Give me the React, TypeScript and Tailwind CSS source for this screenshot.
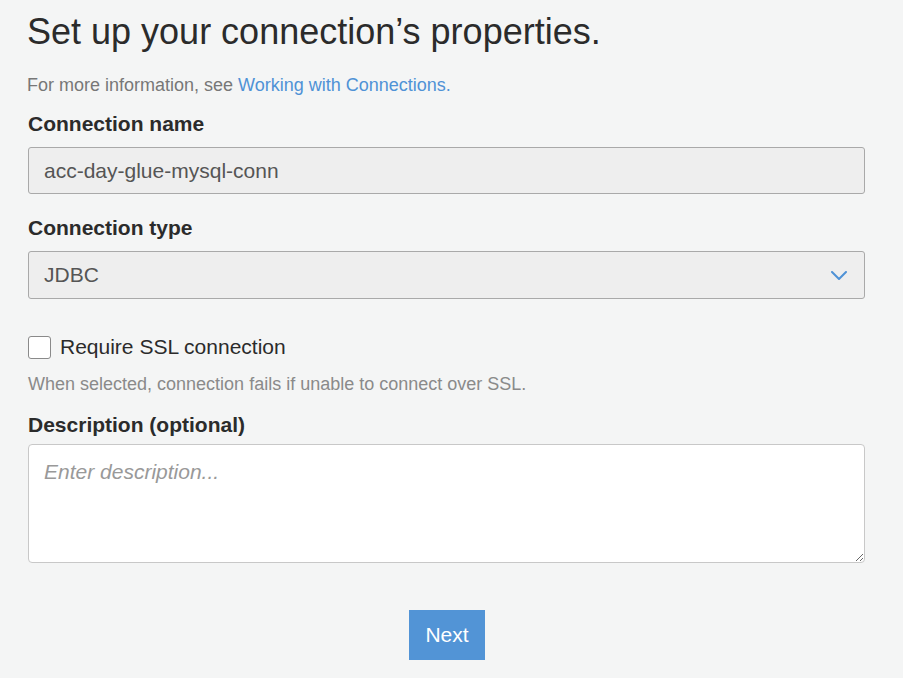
export default function App() {
  return (
    <div className="min-h-screen bg-[#f4f5f5] font-['Liberation_Sans',Arial,sans-serif] text-[#333]">
      <div className="w-[837px] ml-[28px] pt-[12px]">
        <h1 className="text-[36px] leading-[40px] text-[#2b2b2b] -ml-[1px]">Set up your connection’s properties.</h1>
        <p className="mt-[23px] text-[18px] leading-[20px] text-[#777] -ml-[1px]">
          For more information, see <a className="text-[#4f92d6]">Working with Connections.</a>
        </p>

        <label className="block mt-[18px] text-[21px] leading-[22px] font-bold text-[#2b2b2b]">Connection name</label>
        <div className="mt-[12px] h-[47px] flex items-center px-[15px] bg-[#eeeeee] border border-[#a9a9a9] rounded-[3px] text-[21px] text-[#555]">
          acc-day-glue-mysql-conn
        </div>

        <label className="block mt-[23px] text-[21px] leading-[22px] font-bold text-[#2b2b2b]">Connection type</label>
        <div className="mt-[12px] h-[48px] flex items-center justify-between px-[15px] bg-[#eeeeee] border border-[#a9a9a9] rounded-[3px] text-[21px] text-[#555]">
          <span>JDBC</span>
          <svg width="16" height="9" viewBox="0 0 16 9" className="mr-[2px]" fill="none">
            <polyline points="1,1 8,8 15,1" stroke="#4f92d6" strokeWidth="2" strokeLinecap="round" strokeLinejoin="round" />
          </svg>
        </div>

        <label className="mt-[36px] flex items-center gap-[9px] text-[21px] leading-[24px] text-[#2b2b2b]">
          <span className="w-[23px] h-[23px] bg-white border border-[#8a8a8a] rounded-[3px]" />
          Require SSL connection
        </label>
        <p className="mt-[15px] text-[18px] leading-[20px] text-[#8a8a8a]">
          When selected, connection fails if unable to connect over SSL.
        </p>

        <label className="block mt-[20px] text-[21px] leading-[22px] font-bold text-[#2b2b2b]">Description (optional)</label>
        <textarea
          placeholder="Enter description..."
          className="mt-[8px] block w-full h-[119px] px-[15px] py-[11px] bg-white border border-[#c8c8c8] rounded-[4px] text-[21px] placeholder:italic placeholder:text-[#999] outline-none"
        />

        <div className="flex justify-center mt-[47px]">
          <button className="w-[76px] h-[50px] bg-[#5294d6] text-white text-[21px] ml-[1px]">Next</button>
        </div>
      </div>
    </div>
  );
}
